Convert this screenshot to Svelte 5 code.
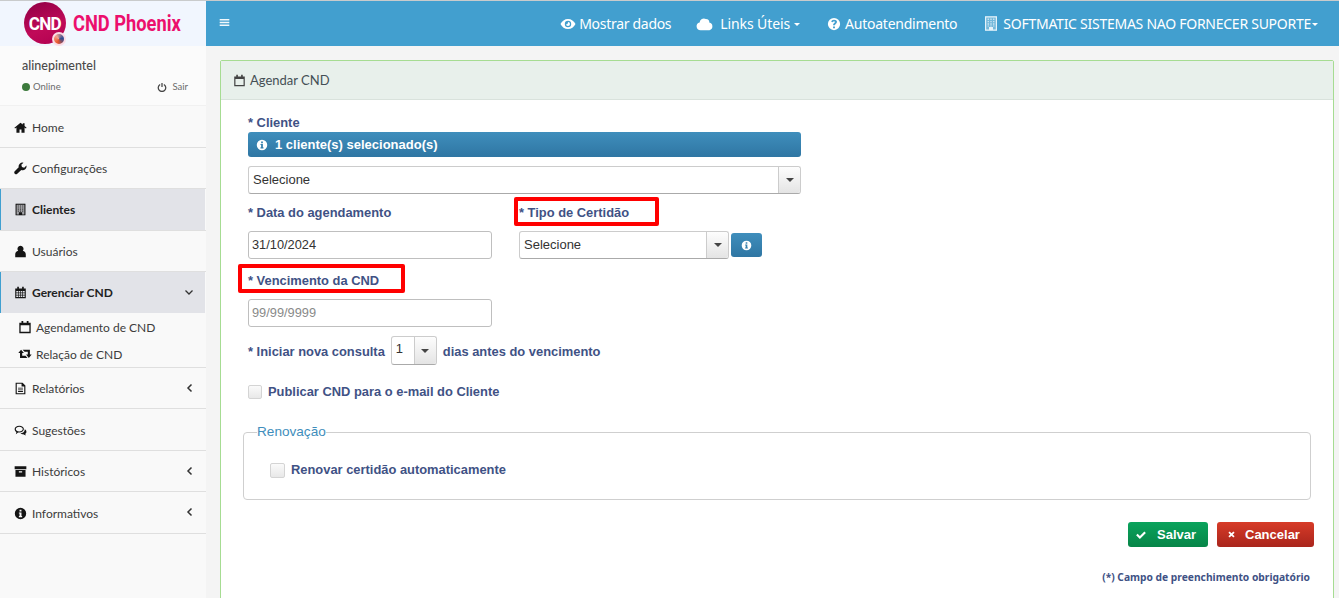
<script>
  const P = {
    home: 'M8 2 .5 8.300l.8 1L3 7.900V14.500h3.800v-4h2.400v4H13V7.900l1.700 1.400.8-1L13 6.200V2.800h-2.200v1.500z',
    wrench: 'M15.300 4.300 12.500 7 9.800 6.300 9 3.500 11.700.8A4.800 4.800 0 0 0 5.800 6.600L.9 11.400a2.200 2.200 0 0 0 3.100 3.100L9 9.900A4.800 4.800 0 0 0 15.300 4.300z',
    user: 'M8 1a3.700 3.700 0 0 1 2.800 6.100c2.200.5 3.700 2.100 3.700 4.600V15h-13v-3.300c0-2.500 1.500-4.100 3.700-4.600A3.700 3.700 0 0 1 8 1z',
    cal: 'M4 1h2v2h4V1h2v2h2.500v12h-13V3H4zM3 6v7.500h10V6z',
    calgrid: 'M4 .8h2V3h4V.8h2V3h2.500v12h-13V3H4zM2.800 6v2h2.400V6zm3.200 0v2h1.600V6zm2.400 0v2H10V6zm2.400 0v2h2.400V6zM2.800 8.800v2h2.400v-2zm3.200 0v2h1.600v-2zm2.400 0v2H10v-2zm2.400 0v2h2.400v-2zM2.800 11.600v2h2.400v-2zm3.200 0v2h1.600v-2zm2.400 0v2H10v-2zm2.400 0v2h2.400v-2z',
    retweet: 'M3.500 3 .3 6.800h2V12.500h8.500l-2.200-2.400H4.800V6.800h2zM5.300 3l2.200 2.400h3.700v3.300h-2l3.200 3.800 3.200-3.800h-2V3z',
    file: 'M2 .8h8.500L14 4.300V15.200H2zM3.400 2.200v11.600h9.200V5.500H9.300V2.200zM5 7h6v1.100H5zm0 2.100h6v1.100H5zm0 2.100h6v1.100H5z',
    chat: 'M6.500 2c3.100 0 5.700 1.900 5.700 4.300s-2.600 4.300-5.700 4.300H5L2.300 12.500l.6-2.500C1.600 9.200.8 7.900.8 6.300.8 3.900 3.400 2 6.500 2zm0 1.400c-2.400 0-4.300 1.300-4.300 2.900S4.100 9.200 6.500 9.200s4.300-1.300 4.300-2.900S8.900 3.400 6.500 3.400zM13.300 6.500c1.300.6 2 1.700 2 2.900 0 1.100-.6 2-1.500 2.600l.7 2.300-3.200-1.600c-1.400 0-2.600-.5-3.300-1.300 2.900 0 5.300-1.900 5.300-4.900z',
    archive: 'M.8 1.500h14.400v3.700H.8zM1.800 6.200h12.400V14.500H1.800zM6 7.800v1.500h4V7.800z',
    info: 'M8 1a7 7 0 1 1 0 14A7 7 0 0 1 8 1zM6.800 3.300v2.200h2.400V3.300zM6 6.700V8h.8v3H6v1.500h4V11h-.8V6.700z',
    eye: 'M8 3c3.300 0 6 2 7.500 5-1.500 3-4.200 5-7.500 5S2 11 .5 8C2 5 4.700 3 8 3zm0 1.800a3.200 3.200 0 1 0 0 6.400 3.200 3.200 0 0 0 0-6.400zM8 6a2 2 0 1 1-2 2c.5.5 2 .5 2-2z',
    cloud: 'M4 13.500a3.500 3.500 0 0 1-.8-6.900 3.800 3.800 0 0 1 5.600-3.100 3 3 0 0 1 3 3.200 3.500 3.500 0 0 1 .2 6.800z',
    question: 'M8 1a7 7 0 1 1 0 14A7 7 0 0 1 8 1zM6.900 10.800v2h2.200v-2zM8 3C6.300 3 5 4 4.800 5.500l2 .5c.2-.7.6-1.100 1.200-1.100s1 .3 1 .8c0 1.200-2.100 1.300-2.100 3.800h2.200c0-1.500 2.300-1.700 2.300-4C11.400 4 9.900 3 8 3z',
    check: 'M1.500 8.300 3.500 6.300l3 3 6-6 2 2-8 8z',
    times: 'M3.500 5.300 5.300 3.500 8 6.200l2.700-2.700 1.800 1.800L9.800 8l2.700 2.700-1.800 1.800L8 9.800l-2.700 2.700-1.800-1.800L6.200 8z',
    bars: 'M1 3h14v2.200H1zM1 7h14v2.200H1zm0 4h14v2.200H1z'
  };

  const menu = [
    { icon: 'home', label: 'Home' },
    { icon: 'wrench', label: 'Configurações' },
    { icon: 'building', label: 'Clientes', active: true },
    { icon: 'user', label: 'Usuários' },
    { icon: 'calgrid', label: 'Gerenciar CND', active: true, chevron: 'down', children: [
      { icon: 'cal', label: 'Agendamento de CND' },
      { icon: 'retweet', label: 'Relação de CND' }
    ] },
    { icon: 'file', label: 'Relatórios', chevron: 'left' },
    { icon: 'chat', label: 'Sugestões' },
    { icon: 'archive', label: 'Históricos', chevron: 'left' },
    { icon: 'info', label: 'Informativos', chevron: 'left' }
  ];
</script>

{#snippet icon(name, cls = '')}
  {#if name === 'building'}
    <svg class="ic {cls}" viewBox="0 0 16 16" aria-hidden="true">
      <rect x="2" y="1" width="12" height="14" fill="currentColor" opacity=".3" />
      <path fill="currentColor" fill-rule="evenodd" d="M2 .8h12v14.400H2zM3.200 2v12h2.800v-2.500h4V14h2.800V2z" />
      <path fill="currentColor" opacity=".75" d="M4.600 3h1.400v1.400H4.600zm2.700 0h1.400v1.400H7.300zm2.700 0h1.400v1.400H10zM4.600 5.400h1.400v1.400H4.600zm2.700 0h1.400v1.400H7.300zm2.700 0h1.400v1.400H10zM4.600 7.800h1.400v1.400H4.600zm2.700 0h1.400v1.400H7.300zm2.700 0h1.400v1.400H10zM4.600 10h1.400v1.100H4.600zm2.700 0h1.400v1.100H7.300zm2.700 0h1.400v1.100H10z" />
    </svg>
  {:else}
    <svg class="ic {cls}" viewBox="0 0 16 16" aria-hidden="true">
      <path fill="currentColor" fill-rule="evenodd" d={P[name]} />
    </svg>
  {/if}
{/snippet}

<div class="page">
  <aside class="side">
    <div class="logo">
      <div class="badge">
        <span class="badge-text">CND</span>
        <span class="phoenix"></span>
      </div>
      <span class="brand">CND Phoenix</span>
    </div>
    <div class="userbox">
      <div class="uname">alinepimentel</div>
      <div class="ustatus">
        <span class="online"><i class="dot"></i>Online</span>
        <span class="sair">
          <svg class="power" viewBox="0 0 16 16" aria-hidden="true">
            <path d="M5 4a6 6 0 1 0 6 0M8 1.500v6.500" fill="none" stroke="currentColor" stroke-width="2" />
          </svg>Sair
        </span>
      </div>
    </div>
    <ul class="menu">
      {#each menu as m}
        <li class="item" class:hasKids={m.children}>
          <div class="row" class:active={m.active}>
            {@render icon(m.icon, 'mi')}
            <span class="mlabel">{m.label}</span>
            {#if m.chevron === 'down'}
              <svg class="chev" viewBox="0 0 10 10" aria-hidden="true"><path d="M1.500 3.500 5 7l3.500-3.500" fill="none" stroke="currentColor" stroke-width="1.300" /></svg>
            {:else if m.chevron === 'left'}
              <svg class="chev" viewBox="0 0 10 10" aria-hidden="true"><path d="M6.500 1.500 3 5l3.500 3.500" fill="none" stroke="currentColor" stroke-width="1.500" /></svg>
            {/if}
          </div>
          {#if m.children}
            <ul class="sub">
              {#each m.children as c}
                <li class="subrow">{@render icon(c.icon, 'si')}<span>{c.label}</span></li>
              {/each}
            </ul>
          {/if}
        </li>
      {/each}
    </ul>
  </aside>

  <div class="right">
    <header class="top">
      <span class="burger">{@render icon('bars', 'bi')}</span>
      <nav class="nav">
        <span class="nv n1">{@render icon('eye', 'ni')}Mostrar dados</span>
        <span class="nv n2">{@render icon('cloud', 'ni cl')}Links Úteis<i class="caret"></i></span>
        <span class="nv n3">{@render icon('question', 'ni q')}Autoatendimento</span>
        <span class="nv n4">{@render icon('building', 'ni bd')}SOFTMATIC SISTEMAS NAO FORNECER SUPORTE<i class="caret c2"></i></span>
      </nav>
    </header>

    <main class="main">
      <section class="card">
        <div class="card-head">{@render icon('cal', 'hi')}Agendar CND</div>
        <div class="form">
          <div class="lbl cliente">* Cliente</div>
          <div class="alert">{@render icon('info', 'ai')}1 cliente(s) selecionado(s)</div>
          <div class="select full"><span>Selecione</span><b class="arrow"><i></i></b></div>

          <div class="cols">
            <div class="col c-a">
              <div class="lbl">* Data do agendamento</div>
              <div class="input w244">31/10/2024</div>
            </div>
            <div class="col c-b">
              <div class="lbl"><span class="mark m1"></span>* Tipo de Certidão</div>
              <div class="tipo">
                <div class="select w210"><span>Selecione</span><b class="arrow"><i></i></b></div>
                <span class="infobtn">{@render icon('info', 'bi2')}</span>
              </div>
            </div>
          </div>

          <div class="lbl venc"><span class="mark m2"></span>* Vencimento da CND</div>
          <div class="input w244 ph">99/99/9999</div>

          <div class="consulta lbl">
            <span>* Iniciar nova consulta</span>
            <div class="select small"><span>1</span><b class="arrow"><i></i></b></div>
            <span>dias antes do vencimento</span>
          </div>

          <label class="chk lbl pub"><i class="box"></i>Publicar CND para o e-mail do Cliente</label>

          <fieldset class="fs">
            <legend>Renovação</legend>
            <label class="chk lbl"><i class="box"></i>Renovar certidão automaticamente</label>
          </fieldset>

          <div class="actions">
            <span class="btn ok">{@render icon('check', 'bti')}Salvar</span>
            <span class="btn no">{@render icon('times', 'bti')}Cancelar</span>
          </div>
          <div class="note">(*) Campo de preenchimento obrigatório</div>
        </div>
      </section>
    </main>
  </div>
</div>

<style>
  :global(body) { margin: 0; background: #f4f4f4; }
  .page { display: flex; height: 598px; width: 1339px; overflow: hidden; font-family: "Liberation Sans", Arial, sans-serif; border-top: 1px solid #c9cbcc; box-sizing: border-box; }
  ul { list-style: none; margin: 0; padding: 0; }

  .side { width: 206px; flex: none; background: #f9f9f9; font-family: "Lato", "Noto Sans", sans-serif; }
  .logo { height: 45px; background: #f1f6fe; display: flex; align-items: center; padding-left: 24px; box-sizing: border-box; }
  .badge { width: 42px; height: 42px; border-radius: 50%; background: linear-gradient(160deg, #8f0045, #c00a58 60%, #b10050); position: relative; display: flex; align-items: center; justify-content: center; margin-top: -1px; }
  .badge-text { color: #fff; font: bold 19px/1 "Roboto", "Liberation Sans", sans-serif; letter-spacing: -.9px; transform: scaleX(.9); }
  .phoenix { position: absolute; right: 0; bottom: -2px; width: 14px; height: 14px; border-radius: 50%; background: conic-gradient(from 200deg, #e9552b, #f2a58f, #2c4a94, #e9552b); border: 2px solid #fbdce6; box-sizing: border-box; }
  .brand { margin-left: 7px; color: #ec0f6d; font: bold 22px/1 "Roboto", "Liberation Sans", sans-serif; transform: scaleX(.83); transform-origin: left; white-space: nowrap; }

  .userbox { height: 60px; padding: 12px 18px 0 22px; box-sizing: border-box; background: #fbfbfb; border-bottom: 1px solid #f1f1f1; }
  .uname { font-size: 12.500px; line-height: 16px; color: #4a4a4a; font-weight: 500; }
  .ustatus { display: flex; justify-content: space-between; font-size: 9.500px; line-height: 14px; color: #6b6b6b; margin-top: 6px; }
  .online, .sair { display: flex; align-items: center; }
  .dot { width: 8px; height: 8px; border-radius: 50%; background: #3c7a3c; margin-right: 3px; }
  .power { width: 10px; height: 10px; margin-right: 5px; color: #444; }

  .item { border-bottom: 1px solid #dfdfdf; }
  .row { height: 40.500px; display: flex; align-items: center; padding: 2px 0 0 14px; font-size: 12px; color: #3c3c3c; box-sizing: border-box; position: relative; }
  .row.active { background: #e2e3e8; color: #222; font-weight: 700; border-left: 1px solid #3f9fd0; padding: 0 0 0 13px; margin-right: 1px; }
  .mlabel { margin-left: 5px; }
  :global(.ic) { display: inline-block; flex: none; }
  :global(.mi) { width: 13px; height: 13px; color: #151515; }
  .chev { width: 10px; height: 10px; position: absolute; right: 11px; top: 15px; color: #333; }
  .sub { padding: 0 0 0 18px; height: 54px; }
  .subrow { height: 27px; padding-top: 2px; box-sizing: border-box; display: flex; align-items: center; font-size: 12px; color: #3c3c3c; }
  :global(.si) { width: 14px; height: 14px; color: #151515; margin-right: 4px; }

  .right { flex: 1; min-width: 0; display: flex; flex-direction: column; }
  .top { height: 45px; background: #429fcf; display: flex; align-items: center; color: #fff; flex: none; }
  .burger { margin-left: 13px; display: flex; margin-top: -3px; }
  :global(.bi) { width: 11px; height: 11px; color: #f1f8fc; }
  .nav { margin-left: auto; display: flex; align-items: center; font: 14px/20px "Noto Sans", sans-serif; padding-right: 21px; }
  .nv { display: flex; align-items: center; white-space: nowrap; }
  .n1 { letter-spacing: -.3px; }
  .n2 { margin-left: 25px; letter-spacing: -.1px; }
  .n3 { margin-left: 27px; letter-spacing: -.25px; }
  .n4 { margin-left: 26px; letter-spacing: -.26px; }
  :global(.ni) { width: 16px; height: 16px; margin-right: 3px; }
  :global(.ni.cl) { width: 18px; height: 18px; margin-right: 6px; }
  :global(.ni.q) { width: 14px; height: 14px; margin-right: 4px; }
  :global(.ni.bd) { width: 16px; height: 17px; margin-right: 4px; color: #e6f3fa; }
  .caret { width: 0; height: 0; border: 3px solid transparent; border-top-color: #fff; border-bottom: 0; margin-left: 4px; margin-top: 2px; }
  .c2 { margin-left: 1px; }

  .main { flex: 1; padding: 14px 5px 0 14px; min-height: 0; }
  .card { background: #fff; border: 1px solid #a6dc92; border-radius: 2px 2px 0 0; height: 620px; box-sizing: border-box; }
  .card-head { height: 38px; background: #e8f0eb; border-bottom: 1px solid #d9e2dc; display: flex; align-items: center; padding-left: 12px; font: 13px "Lato", "Noto Sans", sans-serif; color: #444f55; box-sizing: content-box; }
  :global(.hi) { width: 13px; height: 13px; margin-right: 4px; color: #444; }

  .form { padding: 15px 19px 0 27px; }
  .lbl { font-size: 12.900px; font-weight: bold; line-height: 16px; color: #3f5285; position: relative; }
  .cliente { margin-bottom: 1px; }
  .alert { width: 553px; height: 25px; background: linear-gradient(#3f8ebc, #2f76a3); border-radius: 3px; color: #fff; font-weight: bold; font-size: 13px; display: flex; align-items: center; padding-left: 8px; box-sizing: border-box; }
  :global(.ai) { width: 12px; height: 12px; margin-right: 7px; }
  .select { height: 28px; border: 1px solid #ccc; border-bottom-color: #aaa; border-radius: 3px; background: #fff; box-sizing: border-box; display: flex; align-items: center; justify-content: space-between; font-weight: normal; font-size: 13px; color: #333; padding-left: 4px; }
  .select > span { margin-bottom: 2px; }
  .select.full { width: 553px; margin-top: 9px; }
  .arrow { width: 21px; align-self: stretch; background: linear-gradient(#fdfdfd, #e4e4e4); border-left: 1px solid #ccc; border-radius: 0 3px 3px 0; display: flex; align-items: center; justify-content: center; }
  .arrow i { width: 0; height: 0; border: 4px solid transparent; border-top-color: #444; border-bottom: 0; }
  .cols { display: flex; margin-top: 11px; }
  .c-a { width: 271px; }
  .col .lbl { margin-bottom: 10px; }
  .input { height: 28px; border: 1px solid #bfbfbf; border-radius: 3px; box-sizing: border-box; display: flex; align-items: center; padding: 0 0 2px 3px; font-size: 12.800px; color: #333; background: #fff; }
  .w244 { width: 244px; }
  .ph { color: #8a8a8a; }
  .tipo { display: flex; align-items: center; }
  .w210 { width: 210px; }
  .infobtn { width: 31px; height: 24px; margin-left: 2px; background: linear-gradient(#3f8ebc, #2f76a3); border-radius: 3px; display: flex; align-items: center; justify-content: center; color: #fff; }
  :global(.bi2) { width: 11px; height: 11px; }
  .mark { position: absolute; border: 4px solid #f00; border-radius: 2px; box-sizing: border-box; height: 29px; }
  .m1 { left: -5px; top: -8px; width: 145px; }
  .m2 { left: -10px; top: -9px; width: 167px; }
  .venc { margin-top: 14px; margin-bottom: 10px; }
  .consulta { display: flex; align-items: center; margin-top: 11px; }
  .select.small { width: 46px; height: 29px; margin: -2px 6px 0; }
  .select.small span { margin-bottom: 3px; }
  .chk { display: flex; align-items: center; }
  .box { width: 14px; height: 14px; border: 1px solid #d4d4d4; border-radius: 2px; background: linear-gradient(#fafafa, #e8e8e8); margin-right: 6px; box-sizing: border-box; }
  .pub { margin-top: 19px; }
  .fs { margin: 24px 0 0 -5px; width: 1068px; height: 76px; padding: 0 0 0 26px; border: 1px solid #cfcfcf; border-radius: 4px; box-sizing: border-box; }
  .fs legend { padding: 0; margin-left: -13px; font-size: 13.600px; line-height: 16px; color: #3f8ebc; }
  .fs .chk { margin-top: 22px; }
  .fs .box { width: 15px; height: 15px; }
  .actions { display: flex; justify-content: flex-end; margin-top: 22px; gap: 9px; }
  .btn { height: 25px; border-radius: 3px; color: #fff; font-weight: bold; font-size: 13px; display: flex; align-items: center; box-sizing: border-box; }
  .ok { width: 80px; background: linear-gradient(#0aa35c, #078548); padding-left: 7px; }
  .no { width: 97px; background: linear-gradient(#d73b28, #a9251c); padding-left: 9px; }
  .ok :global(.bti) { width: 12px; height: 12px; margin-right: 10px; }
  .no :global(.bti) { width: 11px; height: 11px; margin-right: 8px; }
  .note { text-align: right; margin-top: 23px; padding-right: 4px; font: bold 10.250px/14px "Noto Sans", sans-serif; color: #3f5285; }
</style>
